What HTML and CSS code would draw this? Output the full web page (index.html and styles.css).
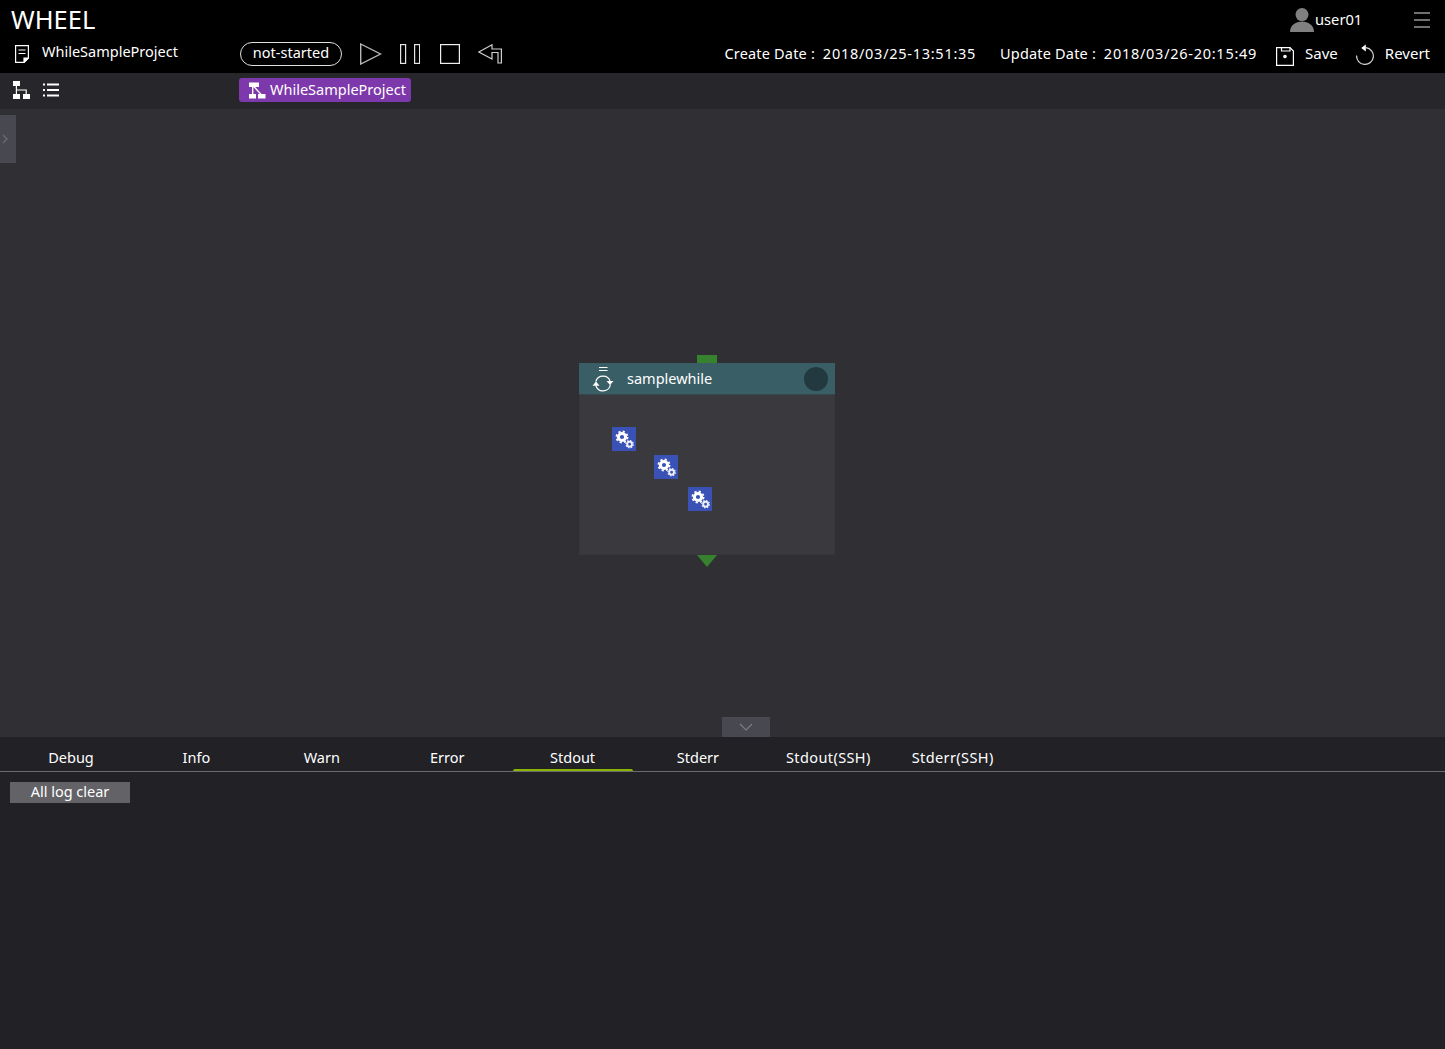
FILE: index.html
```html
<!DOCTYPE html>
<html lang="en">
<head>
  <meta charset="UTF-8">
  <meta name="viewport" content="width=device-width, initial-scale=1.0">
  <title>WHEEL</title>
  <link rel="stylesheet" href="styles.css">
</head>

<body>
  <svg class="defs" width="0" height="0">
    <symbol id="gears" viewBox="0 0 24 24">
      <circle cx="10" cy="10" r="5.6" fill="none" stroke="#fff" stroke-width="1.7" stroke-dasharray="2.2 2.2" />
      <circle cx="10" cy="10" r="3.6" fill="none" stroke="#fff" stroke-width="3" />
      <circle cx="17.6" cy="17.2" r="3.7" fill="none" stroke="#eef0fa" stroke-width="1.2" stroke-dasharray="1.5 1.4" />
      <circle cx="17.6" cy="17.2" r="2.4" fill="none" stroke="#eef0fa" stroke-width="1.9" />
    </symbol>
  </svg>

  <!-- ===== HEADER ===== -->
  <header class="header">
    <div class="title-row">
      <h1 class="logo">WHEEL</h1>
      <div class="user">
        <svg class="user-icon" width="24" height="24" viewBox="0 0 24 24">
          <circle cx="12" cy="6.6" r="6.5" fill="#808080" />
          <path d="M0 24 C0 17 6 13.5 12 13.5 C18 13.5 24 17 24 24 Z" fill="#808080" />
        </svg>
        <span class="user-name">user01</span>
      </div>
      <div class="burger"><i></i><i></i><i></i></div>
    </div>

    <div class="tool-row">
      <div class="project">
        <svg width="14" height="18" viewBox="0 0 14 18" fill="none" stroke="#fff" stroke-width="1.2">
          <path d="M0.6 0.6 H13.4 V13 L9 17.4 H0.6 Z" />
          <path d="M3.5 5 H10.5 M3.5 8.5 H10.5" />
          <path d="M9 17.4 V13 H13.4 Z" fill="#fff" />
        </svg>
        <span class="project-name">WhileSampleProject</span>
      </div>
      <span class="state">not-started</span>
      <div class="controls">
        <svg class="c-play" width="22" height="22" viewBox="0 0 22 22" fill="none" stroke="#b8b8b8" stroke-width="1.4">
          <path d="M0.7 1 L20.5 11 L0.7 21 Z" />
        </svg>
        <svg class="c-pause" width="20" height="20" viewBox="0 0 20 20" fill="none" stroke="#e6e6e6" stroke-width="1.2">
          <rect x="0.6" y="0.6" width="5" height="18.8" />
          <rect x="14.6" y="0.6" width="5" height="18.8" />
        </svg>
        <svg class="c-stop" width="20" height="20" viewBox="0 0 20 20" fill="none" stroke="#f0f0f0" stroke-width="1.2">
          <rect x="0.6" y="0.6" width="18.8" height="18.8" />
        </svg>
        <svg class="c-back" width="24" height="20" viewBox="0 0 24 20" fill="none" stroke="#d0d0d0" stroke-width="1.2">
          <path d="M0.8 8 L14 0.8 V5 H23.4 V19 H20 V8.5 H14 V15 Z" />
        </svg>
      </div>
      <div class="dates">
        <span>Create Date :&nbsp; <b class="stamp">2018/03/25-13:51:35</b></span>
        <span>Update Date :&nbsp; <b class="stamp">2018/03/26-20:15:49</b></span>
      </div>
      <div class="action save">
        <svg width="18" height="19" viewBox="0 0 18 19" fill="none" stroke="#fff" stroke-width="1.2">
          <path d="M0.6 0.6 H14 L17.4 4 V18.4 H0.6 Z" />
          <path d="M5.5 0.6 V4 H14 V0.6" />
          <circle cx="9" cy="9.5" r="1.2" fill="#ddd" />
        </svg>
        <span class="action-name">Save</span>
      </div>
      <div class="action revert">
        <svg width="18" height="22" viewBox="0 0 18 22" fill="none" stroke="#d8d8d8" stroke-width="1.2">
          <path d="M10 3.7 A8.4 8.4 0 1 1 0.6 11.5" />
          <path d="M9.8 0.5 V7.5 L5.2 4 Z" fill="#fff" stroke="none" />
        </svg>
        <span class="action-name">Revert</span>
      </div>
    </div>
  </header>

  <!-- ===== BREADCRUMB BAR ===== -->
  <nav class="subbar">
    <div class="view-icons">
      <svg width="18" height="18" viewBox="0 0 18 18" fill="#fff">
        <rect x="0" y="0" width="7" height="5" />
        <rect x="0" y="13" width="7" height="5" />
        <rect x="10" y="13" width="7" height="5" />
        <path d="M2.8 5 H4 V8.4 H13.8 V13 H12.6 V9.6 H4 V13 H2.8 Z" />
      </svg>
      <svg width="16" height="14" viewBox="0 0 16 14" fill="#fff">
        <rect x="0" y="0.5" width="2" height="2" />
        <rect x="4" y="0.5" width="12" height="2" />
        <rect x="0" y="6" width="2" height="2" />
        <rect x="4" y="6" width="12" height="2" />
        <rect x="0" y="11.5" width="2" height="2" />
        <rect x="4" y="11.5" width="12" height="2" />
      </svg>
    </div>
    <a class="crumb">
      <svg width="18" height="17" viewBox="0 0 18 17" fill="#fff">
        <rect x="1" y="0.5" width="10" height="4.5" />
        <rect x="1" y="12" width="7" height="4.5" />
        <rect x="10" y="12" width="7.5" height="4.5" />
        <path d="M4 5 H5.4 V12 H4 Z M5.4 5 H7.2 L13.6 12 H11.8 Z" />
      </svg>
      WhileSampleProject
    </a>
  </nav>

  <!-- ===== WORKFLOW CANVAS ===== -->
  <main class="canvas">
    <div class="side-handle">
      <svg width="6" height="10" viewBox="0 0 6 10" fill="none" stroke="#6c6d74" stroke-width="1.2"><path d="M1 1 L5 5 L1 9" /></svg>
    </div>

    <div class="node">
      <div class="plug-top"></div>
      <div class="node-head">
        <svg class="node-icon" width="24" height="26" viewBox="0 0 24 26" fill="none" stroke="#fff" stroke-width="1.2">
          <path d="M8 1.5 H16.5 M8 4.5 H16.5" />
          <path d="M4.8 15.5 A7.5 7.5 0 0 1 19.2 15.5" />
          <path d="M19.4 18.5 A7.5 7.5 0 0 1 4.8 19.5" />
          <path d="M15.5 15 H22.5 L19 19 Z" fill="#fff" stroke="none" />
          <path d="M1.5 19.8 H8.5 L5 15.5 Z" fill="#fff" stroke="none" />
        </svg>
        <span class="node-name">samplewhile</span>
        <span class="node-state"></span>
      </div>
      <div class="task task1"><svg width="24" height="24"><use href="#gears" /></svg></div>
      <div class="task task2"><svg width="24" height="24"><use href="#gears" /></svg></div>
      <div class="task task3"><svg width="24" height="24"><use href="#gears" /></svg></div>
      <div class="plug-bottom"></div>
    </div>

    <div class="log-handle">
      <svg width="14" height="8" viewBox="0 0 14 8" fill="none" stroke="#7c7d84" stroke-width="1.2"><path d="M1 1 L7 7 L13 1" /></svg>
    </div>
  </main>

  <!-- ===== LOG PANEL ===== -->
  <section class="logs">
    <div class="tabs">
      <span class="tab">Debug</span>
      <span class="tab">Info</span>
      <span class="tab">Warn</span>
      <span class="tab">Error</span>
      <span class="tab active">Stdout</span>
      <span class="tab">Stderr</span>
      <span class="tab wide">Stdout(SSH)</span>
      <span class="tab narrow">Stderr(SSH)</span>
    </div>
    <button class="clear">All log clear</button>
  </section>
</body>
</html>
```

FILE: styles.css
```css
html, body {
  margin: 0; padding: 0;
  width: 100%; height: 100%;
  overflow: hidden;
}

body {
  display: flex;
  flex-direction: column;
  background: #212126;
  color: #fff;
  font: 14.5px/20px "Noto Sans", Verdana, sans-serif;
}

.defs { position: absolute; }
svg { display: block; flex: none; }

/* ---------------- Header ---------------- */
.header { height: 73px; background: #000; flex: none; }

.title-row {
  display: flex;
  align-items: center;
  height: 40px;
  padding: 0 15px 0 11px;
}
.logo { margin: -2px 0 0; font-size: 25.5px; font-weight: 400; line-height: 40px; flex: 1; }

.user { display: flex; align-items: center; gap: 1px; width: 72px; margin-right: 52px; font-size: 14.7px; }
.user-name { margin-top: -2px; }
.burger { display: flex; flex-direction: column; gap: 5px; width: 16px; }
.burger i { display: block; height: 2px; background: #707070; }

.tool-row {
  display: flex;
  align-items: center;
  height: 28px;
  padding: 0 15px 5px;
}
.project { display: flex; align-items: center; gap: 13px; width: 225px; }
.project-name { margin-top: -6px; }
.state {
  box-sizing: border-box;
  width: 102px; height: 24px;
  border: 1px solid #e0e0e0;
  border-radius: 12px;
  text-align: center;
  line-height: 18px;
}
.controls { display: flex; align-items: center; margin-left: 18px; flex: 1; }
.c-pause { margin-left: 18px; }
.c-stop { margin-left: 20px; }
.c-back { margin-left: 18px; }

.dates { display: flex; gap: 24px; margin-top: -2px; letter-spacing: 0.18px; }
.stamp { font-weight: 400; letter-spacing: 0.73px; }
.action { display: flex; align-items: center; font-size: 15px; }
.action-name { margin-top: -2px; }
.save { margin-left: 19px; gap: 11px; }
.save svg { margin-top: 4px; }
.revert { margin-left: 18px; gap: 11px; }
.revert svg { margin-top: 1px; }

/* ---------------- Breadcrumb bar ---------------- */
.subbar {
  display: flex;
  align-items: center;
  height: 34px;
  flex: none;
  padding: 0 0 2px 13px;
  background: #26262b;
}
.view-icons { display: flex; align-items: center; gap: 12px; width: 226px; }
.crumb {
  display: flex;
  align-items: center;
  gap: 4px;
  height: 24px;
  padding: 0 5px 2px 9px;
  box-sizing: border-box;
  border-radius: 3px;
  background: #7d38ab;
}
.crumb svg { margin-top: 2px; }

/* ---------------- Canvas ---------------- */
.canvas {
  position: relative;
  height: 628px;
  flex: none;
  background: #2f2f34;
}
.side-handle {
  position: absolute;
  left: 0; top: 6px;
  display: flex;
  align-items: center;
  width: 16px; height: 48px;
  padding-left: 2px;
  box-sizing: border-box;
  background: #484950;
}
.log-handle {
  position: absolute;
  left: 722px; bottom: 0;
  display: flex;
  align-items: center;
  justify-content: center;
  width: 48px; height: 20px;
  background: #484950;
}

/* ---------------- Node on the canvas ---------------- */
.node {
  position: absolute;
  left: 579px; top: 254px;
  width: 256px; height: 192px;
  background: #3a393e;
  box-shadow: inset 0 0 0 1px #363539;
}
.node-head {
  display: flex;
  align-items: center;
  height: 31px;
  padding: 0 7px 0 12px;
  background: #3a5e66;
  box-shadow: 0 1px 0 #35464c;
}
.node-name { flex: 1; margin: -2px 0 0 12px; }
.node-state { width: 24px; height: 24px; border-radius: 50%; background: #233940; }

.plug-top {
  position: absolute;
  left: 118px; top: -8px;
  width: 20px; height: 8px;
  background: #37822f;
}
.plug-bottom {
  position: absolute;
  left: 118px; bottom: -12px;
  width: 0; height: 0;
  border-left: 10px solid transparent;
  border-right: 10px solid transparent;
  border-top: 12px solid #37822f;
}

.task {
  position: absolute;
  width: 24px; height: 24px;
  background: #3a52b5;
}
.task1 { left: 33px; top: 64px; }
.task2 { left: 75px; top: 92px; }
.task3 { left: 109px; top: 124px; }

/* ---------------- Log panel ---------------- */
.logs { flex: 1; }
.tabs {
  display: flex;
  gap: 5.4px;
  height: 34px;
  padding-left: 11px;
  border-bottom: 1px solid #6a6a6f;
}
.tab {
  position: relative;
  width: 120px;
  padding-top: 10px;
  line-height: 20px;
  text-align: center;
}
.tab.wide { width: 130px; letter-spacing: 0.4px; }
.tab.narrow { width: 108px; letter-spacing: 0.4px; }
.tab.active::after {
  content: "";
  position: absolute;
  left: 0; right: 0; bottom: 0;
  height: 2px;
  border-radius: 2px 2px 0 0;
  background: #8ab400;
}
.clear {
  display: block;
  width: 120px; height: 21px;
  margin: 10px 0 0 10px;
  padding: 0 0 3px;
  border: none;
  background: #626267;
  color: #fff;
  font: inherit;
  line-height: 18px;
}
```
